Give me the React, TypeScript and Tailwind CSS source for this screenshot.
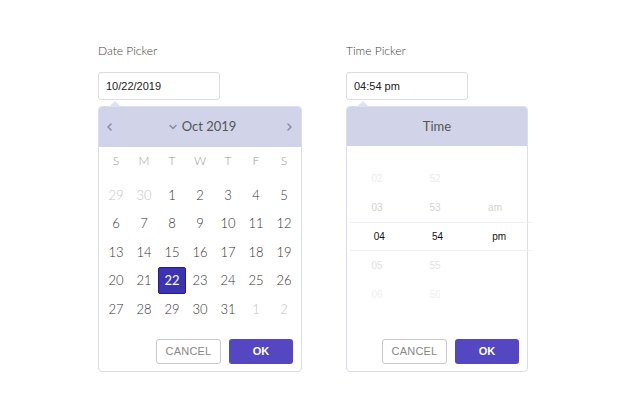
import React from "react";

const lato = { fontFamily: "Lato, 'Open Sans', sans-serif" };
const arial = { fontFamily: "'Liberation Sans', Arial, sans-serif" };

const weeks: { d: number; muted?: boolean }[][] = [
  [{ d: 29, muted: true }, { d: 30, muted: true }, { d: 1 }, { d: 2 }, { d: 3 }, { d: 4 }, { d: 5 }],
  [{ d: 6 }, { d: 7 }, { d: 8 }, { d: 9 }, { d: 10 }, { d: 11 }, { d: 12 }],
  [{ d: 13 }, { d: 14 }, { d: 15 }, { d: 16 }, { d: 17 }, { d: 18 }, { d: 19 }],
  [{ d: 20 }, { d: 21 }, { d: 22 }, { d: 23 }, { d: 24 }, { d: 25 }, { d: 26 }],
  [{ d: 27 }, { d: 28 }, { d: 29 }, { d: 30 }, { d: 31 }, { d: 1, muted: true }, { d: 2, muted: true }],
];

function Caret() {
  return (
    <div className="absolute left-[10px] top-[-6px] w-0 h-0 border-l-[6px] border-r-[6px] border-b-[6px] border-l-transparent border-r-transparent border-b-[#dfe1f0]" />
  );
}

function Buttons() {
  return (
    <div className="mt-auto flex justify-end gap-2 px-2 pb-[7px]" style={arial}>
      <button className="w-[65px] h-[25px] border border-[#c8c8c8] rounded-[3px] bg-white text-[11px] text-[#888] tracking-[0.2px]">
        CANCEL
      </button>
      <button className="w-[64px] h-[25px] rounded-[3px] bg-[#5546c2] text-[11px] font-bold text-white">
        OK
      </button>
    </div>
  );
}

function Chevron({ dir }: { dir: "left" | "right" | "down" }) {
  const d = dir === "left" ? "M6 2 L3 5 L6 8" : dir === "right" ? "M3 2 L6 5 L3 8" : "M2 3.5 L5 6.5 L8 3.5";
  return (
    <svg width="10" height="10" viewBox="0 0 10 10" fill="none">
      <path d={d} stroke="#8a8ea8" strokeWidth="1.6" strokeLinecap="round" strokeLinejoin="round" />
    </svg>
  );
}

function DatePicker() {
  return (
    <div className="flex flex-col w-[204px]">
      <div className="text-[12px] leading-[16px] font-light text-[#444] pt-[43px]" style={lato}>
        Date Picker
      </div>
      <div
        className="mt-[13px] w-[122px] h-[28px] border border-[#dcdcdc] rounded-[3px] flex items-center px-[7px] text-[11px] text-[#222]"
        style={arial}
      >
        10/22/2019
      </div>
      <div className="relative mt-[6px] h-[266px] border border-[#dcdcf0] rounded-[4px] flex flex-col bg-white">
        <Caret />
        <div className="h-[40px] bg-[#d1d4e9] rounded-t-[3px] flex items-center justify-between px-[6px]">
          <Chevron dir="left" />
          <div className="flex items-center gap-[4px] text-[13px] text-[#555] ml-[4px]" style={lato}>
            <Chevron dir="down" />
            <span>Oct 2019</span>
          </div>
          <Chevron dir="right" />
        </div>
        <div className="px-[3px]" style={lato}>
          <div className="grid grid-cols-7 h-[28px] items-center text-center text-[12px] font-light text-[#999]">
            {["S", "M", "T", "W", "T", "F", "S"].map((s, i) => (
              <div key={i}>{s}</div>
            ))}
          </div>
          <div className="mt-[6px]">
            {weeks.map((w, i) => (
              <div key={i} className="grid grid-cols-7 h-[28.5px] items-center text-center text-[13px] font-light">
                {w.map((c, j) => {
                  const sel = i === 3 && c.d === 22;
                  return (
                    <div key={j} className="flex justify-center">
                      {sel ? (
                        <div className="w-[28px] h-[27px] flex items-center justify-center bg-[#3a34b0] border border-[#221c8a] rounded-[2px] text-white font-normal">
                          22
                        </div>
                      ) : (
                        <span className={c.muted ? "text-[#c4c4c4]" : "text-[#333]"}>{c.d}</span>
                      )}
                    </div>
                  );
                })}
              </div>
            ))}
          </div>
        </div>
        <Buttons />
      </div>
    </div>
  );
}

const timeRows = [
  { h: "02", m: "52", p: "", c: "text-[#ececec]" },
  { h: "03", m: "53", p: "am", c: "text-[#d2d2d2]" },
  { h: "04", m: "54", p: "pm", c: "text-[#111]" },
  { h: "05", m: "55", p: "", c: "text-[#e2e2e2]" },
  { h: "06", m: "56", p: "", c: "text-[#efefef]" },
];

function TimePicker() {
  return (
    <div className="flex flex-col w-[182px]">
      <div className="text-[12px] leading-[16px] font-light text-[#444] pt-[43px]" style={lato}>
        Time Picker
      </div>
      <div
        className="mt-[13px] w-[122px] h-[28px] border border-[#dcdcdc] rounded-[3px] flex items-center px-[7px] text-[11px] text-[#222]"
        style={arial}
      >
        04:54 pm
      </div>
      <div className="relative mt-[6px] h-[266px] border border-[#dcdcf0] rounded-[4px] flex flex-col bg-white">
        <Caret />
        <div
          className="h-[39px] bg-[#d1d4e9] rounded-t-[3px] flex items-center justify-center text-[13px] text-[#555]"
          style={lato}
        >
          Time
        </div>
        <div className="pt-[18px]" style={arial}>
          {timeRows.map((r, i) => (
            <div
              key={i}
              className={
                "h-[29px] flex items-center text-[10px] " +
                r.c +
                (i === 2 ? " border-y border-[#efeff7] ml-[3px] mr-[-5px]" : "")
              }
            >
              <div className={"text-center " + (i === 2 ? "w-[59px]" : "w-[62px]")}>{r.h}</div>
              <div className="w-[58px] text-center">{r.m}</div>
              <div className="w-[66px] text-center">{r.p}</div>
            </div>
          ))}
        </div>
        <Buttons />
      </div>
    </div>
  );
}

export default function App() {
  return (
    <div className="w-[640px] h-[418px] bg-white flex gap-[44px] pl-[98px]">
      <DatePicker />
      <TimePicker />
    </div>
  );
}
